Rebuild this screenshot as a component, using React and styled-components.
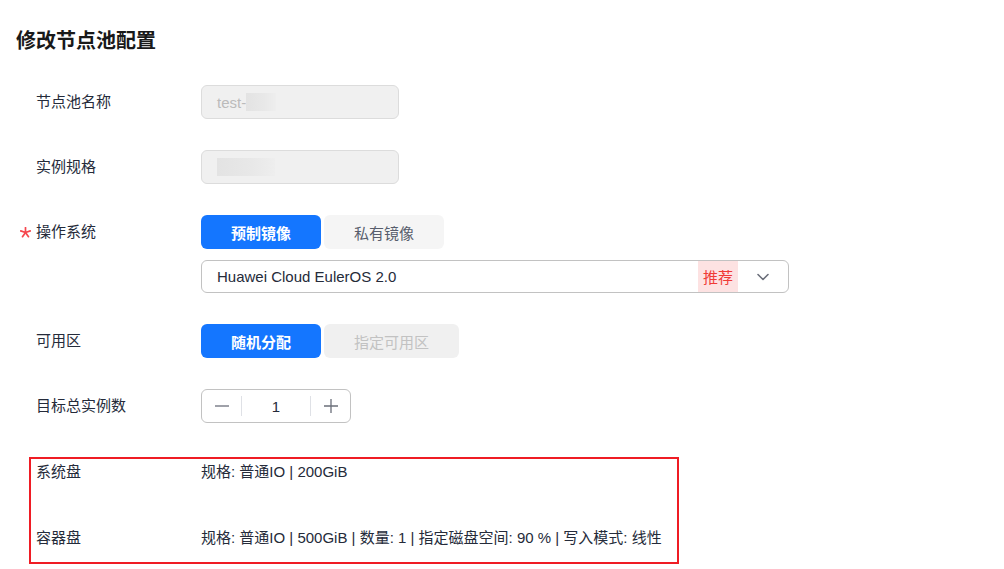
import React from "react";
import styled, { createGlobalStyle } from "styled-components";

const GlobalStyle = createGlobalStyle`
  html, body {
    margin: 0;
    padding: 0;
    background: #ffffff;
  }
  body {
    font-family: "Liberation Sans", Arial, "Noto Sans CJK SC", sans-serif;
    color: #252b3a;
  }
`;

const Page = styled.div`
  width: 1004px;
  height: 569px;
  box-sizing: border-box;
  padding: 27px 0 0 16px;
  overflow: hidden;
`;

const Title = styled.h1`
  margin: 0;
  font-size: 20px;
  line-height: 28px;
  font-weight: 700;
  color: #191919;
`;

const Form = styled.div`
  display: flex;
  flex-direction: column;
  gap: 31px;
  margin-top: 30px;
  padding-left: 20px;
`;

const Row = styled.div`
  display: flex;
  align-items: flex-start;
`;

const Label = styled.div`
  position: relative;
  width: 165px;
  flex-shrink: 0;
  font-size: 15px;
  line-height: ${(p) => (p.$tall ? "34px" : "22px")};
  color: #252b3a;
`;

const Required = styled.span`
  position: absolute;
  left: -16px;
  top: 12px;
  width: 11px;
  height: 11px;
  display: flex;
`;

const Field = styled.div`
  display: flex;
  flex-direction: column;
  gap: 11px;
`;

const ReadOnlyInput = styled.div`
  width: 198px;
  height: 34px;
  box-sizing: border-box;
  border: 1px solid #dcdcdc;
  border-radius: 6px;
  background: #f0f0f0;
  display: flex;
  align-items: center;
  padding-left: 15px;
  font-size: 15px;
  color: #bbbbbb;
`;

const Redacted = styled.span`
  display: inline-block;
  width: ${(p) => p.$w}px;
  height: 18px;
  background: linear-gradient(90deg, #e3e3e3 0%, #e8e8e8 60%, #eeeeee 100%);
`;

const ButtonGroup = styled.div`
  display: flex;
  gap: 3px;
`;

const Choice = styled.button`
  width: ${(p) => p.$w}px;
  height: 34px;
  border: none;
  border-radius: 6px;
  font-family: inherit;
  font-size: 15px;
  font-weight: ${(p) => (p.$active ? 700 : 400)};
  cursor: pointer;
  background: ${(p) =>
    p.$active ? "#1476ff" : p.$disabled ? "#f0f0f0" : "#f5f5f5"};
  color: ${(p) => (p.$active ? "#ffffff" : p.$disabled ? "#c2c2c2" : "#575d6c")};
`;

const Select = styled.div`
  width: 588px;
  height: 33px;
  box-sizing: border-box;
  border: 1px solid #c2c2c2;
  border-radius: 6px;
  display: flex;
  align-items: stretch;
  overflow: hidden;
`;

const SelectValue = styled.div`
  flex: 1;
  display: flex;
  align-items: center;
  padding-left: 15px;
  font-size: 15px;
  color: #252b3a;
`;

const Tag = styled.div`
  width: 40px;
  display: flex;
  align-items: center;
  justify-content: center;
  background: #fde2e2;
  color: #f03b36;
  font-size: 15px;
`;

const Arrow = styled.div`
  width: 50px;
  display: flex;
  align-items: center;
  justify-content: center;
`;

const Stepper = styled.div`
  width: 150px;
  height: 34px;
  box-sizing: border-box;
  border: 1px solid #c2c2c2;
  border-radius: 6px;
  display: flex;
  align-items: center;
`;

const StepButton = styled.div`
  width: 39px;
  height: 100%;
  display: flex;
  align-items: center;
  justify-content: center;
  cursor: pointer;
`;

const StepDivider = styled.div`
  width: 1px;
  height: 20px;
  background: #dfe1e6;
`;

const StepValue = styled.div`
  flex: 1;
  text-align: center;
  font-size: 15px;
  color: #252b3a;
`;

const Highlight = styled.div`
  width: 650px;
  box-sizing: border-box;
  margin-top: 3px;
  margin-left: -7px;
  border: 2px solid #ef1c24;
  padding: 2px 0 13px 5px;
  display: flex;
  flex-direction: column;
  gap: 44px;
`;

const InfoText = styled.div`
  font-size: 15px;
  line-height: 22px;
  color: #252b3a;
`;

const Star = () => (
  <svg width="11" height="11" viewBox="0 0 11 11">
    <path
      d="M5.5 0.5 L5.5 5.5 M5.5 5.5 L10.3 3.9 M5.5 5.5 L8.5 9.7 M5.5 5.5 L2.5 9.7 M5.5 5.5 L0.7 3.9"
      stroke="#f5474e"
      strokeWidth="1.7"
      strokeLinecap="round"
    />
  </svg>
);

const Chevron = () => (
  <svg width="14" height="14" viewBox="0 0 14 14" fill="none">
    <path d="M2 4.5 L7 9.5 L12 4.5" stroke="#6b6f7a" strokeWidth="1.6" strokeLinecap="round" strokeLinejoin="round" />
  </svg>
);

const Minus = () => (
  <svg width="16" height="16" viewBox="0 0 16 16">
    <path d="M1 8 H15" stroke="#6b6f7a" strokeWidth="1.3" />
  </svg>
);

const Plus = () => (
  <svg width="16" height="16" viewBox="0 0 16 16">
    <path d="M1 8 H15 M8 1 V15" stroke="#6b6f7a" strokeWidth="1.3" />
  </svg>
);

const App = () => {
  return (
    <>
      <GlobalStyle />
      <Page>
        <Title>修改节点池配置</Title>
        <Form>
          <Row>
            <Label $tall>节点池名称</Label>
            <ReadOnlyInput>
              test-<Redacted $w={30} />
            </ReadOnlyInput>
          </Row>
          <Row>
            <Label $tall>实例规格</Label>
            <ReadOnlyInput>
              <Redacted $w={58} />
            </ReadOnlyInput>
          </Row>
          <Row>
            <Label $tall>
              <Required>
                <Star />
              </Required>
              操作系统
            </Label>
            <Field>
              <ButtonGroup>
                <Choice $w={120} $active>预制镜像</Choice>
                <Choice $w={120}>私有镜像</Choice>
              </ButtonGroup>
              <Select>
                <SelectValue>Huawei Cloud EulerOS 2.0</SelectValue>
                <Tag>推荐</Tag>
                <Arrow>
                  <Chevron />
                </Arrow>
              </Select>
            </Field>
          </Row>
          <Row>
            <Label $tall>可用区</Label>
            <ButtonGroup>
              <Choice $w={120} $active>随机分配</Choice>
              <Choice $w={135} $disabled>指定可用区</Choice>
            </ButtonGroup>
          </Row>
          <Row>
            <Label $tall>目标总实例数</Label>
            <Stepper>
              <StepButton>
                <Minus />
              </StepButton>
              <StepDivider />
              <StepValue>1</StepValue>
              <StepDivider />
              <StepButton>
                <Plus />
              </StepButton>
            </Stepper>
          </Row>
          <Highlight>
            <Row>
              <Label>系统盘</Label>
              <InfoText>规格: 普通IO | 200GiB</InfoText>
            </Row>
            <Row>
              <Label>容器盘</Label>
              <InfoText>
                规格: 普通IO | 500GiB | 数量: 1 | 指定磁盘空间: 90 % | 写入模式: 线性
              </InfoText>
            </Row>
          </Highlight>
        </Form>
      </Page>
    </>
  );
};

export default App;
